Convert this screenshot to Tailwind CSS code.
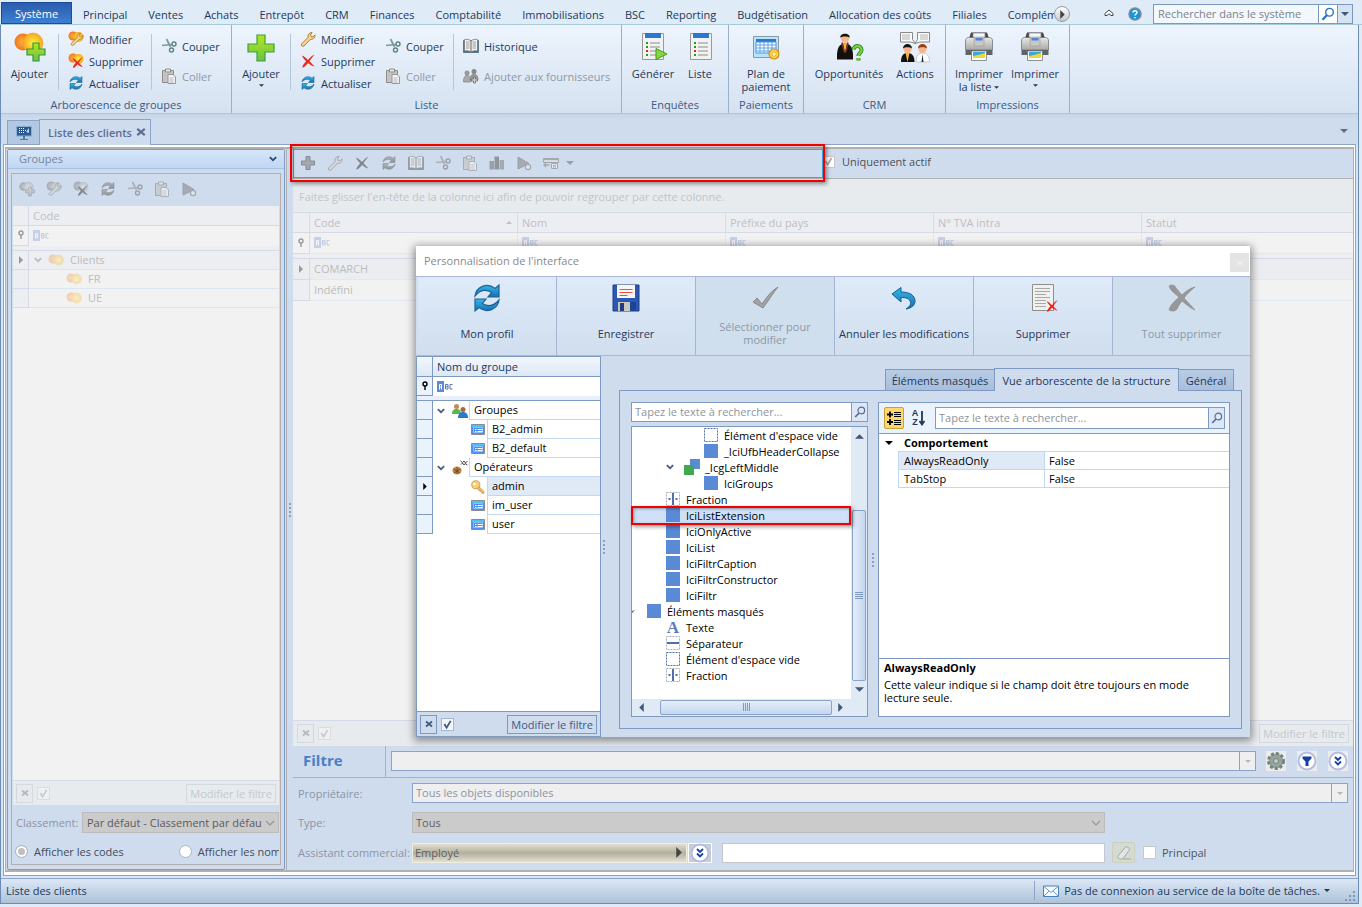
<!DOCTYPE html>
<html lang="fr">
<head>
    <meta charset="UTF-8">
    <meta name="viewport" content="width=device-width, initial-scale=1.0">
    <title>Liste des clients</title>
    <script src="https://cdn.jsdelivr.net/npm/@tailwindcss/browser@4"></script>
</head>
<body class="relative flex flex-col min-h-screen bg-[#dfebf7] font-['Open_Sans','Noto_Sans',sans-serif] text-[11px] leading-[13px] text-[#1e395b]">

    <!-- Icon sprite -->
    <svg class="absolute w-0 h-0" aria-hidden="true">
        <defs>
            <linearGradient id="g-green" x1="0" y1="0" x2="0" y2="1"><stop offset="0" stop-color="#b4e61e"/><stop offset="1" stop-color="#6cc04a"/></linearGradient>
            <radialGradient id="g-orange"><stop offset="0" stop-color="#ffb04a"/><stop offset="1" stop-color="#f07818"/></radialGradient>
            <radialGradient id="g-yellow"><stop offset="0" stop-color="#fff04a"/><stop offset="1" stop-color="#f8a81c"/></radialGradient>
            <linearGradient id="g-blue" x1="0" y1="0" x2="0" y2="1"><stop offset="0" stop-color="#35b8e8"/><stop offset="1" stop-color="#1c6cb0"/></linearGradient>
            <linearGradient id="g-gray" x1="0" y1="0" x2="0" y2="1"><stop offset="0" stop-color="#e8e8e6"/><stop offset="1" stop-color="#a8a8a4"/></linearGradient>
        </defs>
        <symbol id="balls-plus" viewBox="0 0 32 32">
            <circle cx="9" cy="11" r="8.500" fill="url(#g-orange)"/><circle cx="19" cy="12" r="10" fill="url(#g-yellow)" stroke="#f0a020" stroke-width=".6"/>
            <path d="M19 12h6v6h6v6h-6v6h-6v-6h-6v-6h6z" fill="url(#g-green)" stroke="#2f9a3c" stroke-width="1.200"/>
        </symbol>
        <symbol id="plus" viewBox="0 0 32 32"><path d="M12 4h8v9h9v8h-9v9h-8v-9H3v-8h9z" fill="url(#g-green)" stroke="#3aa23c" stroke-width="1.200"/></symbol>
        <symbol id="plus-dark" viewBox="0 0 16 16"><path d="M6 1.500h4V6h4.500v4H10v4.500H6V10H1.500V6H6z" fill="#888" stroke="#555"/></symbol>
        <symbol id="wrench" viewBox="0 0 16 16"><path d="M1.500 13L8 6.500C7.500 4 9 1.500 12 1.500L10.500 4l.7 1.600 1.800.2 2-2c.3 3-2 5-4.500 4.500L4 15c-1.500 1-3.500-.5-2.500-2z" fill="#fbd489" stroke="#a07838" stroke-width=".9"/></symbol>
        <symbol id="cross" viewBox="0 0 16 16"><path d="M2 2.500C4 3 6 5 8 7c2-2.500 4-4.500 6.500-5.500C12.500 4 11 6 9.500 8.300c1.500 1.700 3.300 3.500 5 5.200C12 13 9.800 11.500 8 10c-1.700 2-3 4-5.500 4.800C2 13 4 10.500 6.200 8.300 4.500 6.500 2.500 4.500 2 2.500z" fill="#e8281c"/></symbol>
        <symbol id="cross-big" viewBox="0 0 32 32"><path d="M3 4c3-2 6-1 7 2l6 7c4-4 8-7 13-8-4 3-8 7-11 11l11 12c-5-2-9-6-13-9-2 3-4 5-5 8-1 2-5 3-8 1 1-5 6-9 10-13C9 12 4 8 3 4z" fill="#989898" stroke="#888" stroke-width=".6"/></symbol>
        <symbol id="balls" viewBox="0 0 16 16"><circle cx="5" cy="7" r="4.500" fill="url(#g-orange)"/><circle cx="10.500" cy="8" r="5" fill="url(#g-yellow)" stroke="#f0a020" stroke-width=".5"/></symbol>
        <symbol id="balls-wrench" viewBox="0 0 16 16"><circle cx="5" cy="5" r="4.500" fill="url(#g-orange)"/><circle cx="10.500" cy="6" r="5" fill="url(#g-yellow)"/><use href="#wrench" x="2" y="1" width="14" height="14"/></symbol>
        <symbol id="balls-cross" viewBox="0 0 16 16"><circle cx="5" cy="5" r="4.500" fill="url(#g-orange)"/><circle cx="10.500" cy="6" r="5" fill="url(#g-yellow)"/><use href="#cross" x="3" y="3" width="13" height="13"/></symbol>
        <symbol id="refresh" viewBox="0 0 16 16">
            <path d="M2 7C2.500 2.500 8 0 12 3.200L14 1.500V7.500H8.500L10.300 5.300C7.500 3.500 4.500 4 2 7z" fill="url(#g-blue)" stroke="#1a6496" stroke-width=".6"/>
            <path d="M14 9C13.500 13.500 8 16 4 12.800L2 14.500V8.500H7.500L5.700 10.700C8.500 12.500 11.500 12 14 9z" fill="url(#g-blue)" stroke="#1a6496" stroke-width=".6"/>
        </symbol>
        <symbol id="scissors" viewBox="0 0 16 16"><path d="M5.500 1L9.500 9M1 7.500L11 6.500" stroke="#7c9c9c" stroke-width="1.700" fill="none"/><circle cx="13" cy="6" r="2" fill="none" stroke="#5f8484" stroke-width="1.400"/><circle cx="10.500" cy="12" r="2" fill="none" stroke="#5f8484" stroke-width="1.400"/></symbol>
        <symbol id="paste" viewBox="0 0 16 16"><path d="M1.500 2.500h11v12h-11z" fill="#c4c4c2" stroke="#8c8c8a"/><path d="M4.500 1h5v3h-5z" fill="#e8e8e8" stroke="#8c8c8a"/><path d="M7 6.500h5l2.500 2.500v6.500H7z" fill="#f4f4f4" stroke="#969696"/><path d="M8.500 10h4M8.500 12h4M8.500 14h4" stroke="#aaa" stroke-width=".8"/></symbol>
        <symbol id="book" viewBox="0 0 16 16"><path d="M.5 2.500h15v12H.5z" fill="#2f70b4" stroke="#5c7890"/><path d="M1.500 1.500C4 1 6.500 1.500 8 3c1.500-1.500 4-2 6.500-1.500V13c-2.500-.5-5 0-6.500 1-1.500-1-4-1.500-6.500-1z" fill="#f4f2ec" stroke="#777" stroke-width=".8"/><path d="M8 3v11" stroke="#666"/><path d="M3 4h3.500M3 6h3.500M3 8h3.500M3 10h3.500M9.500 4H13M9.500 6H13M9.500 8H13M9.500 10H13" stroke="#888" stroke-width=".8"/></symbol>
        <symbol id="people" viewBox="0 0 16 16"><circle cx="4" cy="5" r="2.500" fill="#999"/><path d="M.5 14c0-5 1.500-6.500 3.500-6.500S8 9 8 14z" fill="#aaa" stroke="#777" stroke-width=".6"/><circle cx="11" cy="3.500" r="2.500" fill="#888"/><path d="M7 12c0-4 1.500-6 4-6s4 2 4 6z" fill="#999" stroke="#777" stroke-width=".6"/><path d="M10.500 9h2v2h2v2h-2v2h-2v-2h-2v-2h2z" fill="#ccc" stroke="#666" stroke-width=".7"/></symbol>
        <symbol id="report" viewBox="0 0 32 32"><path d="M6.500 2.500h21v26h-21z" fill="#f2f2f0" stroke="#9a9a9a"/><path d="M9 2h16v5H9z" fill="#2a78d4"/><path d="M10 11h2v2h-2zM10 15h2v2h-2zM10 23h2v2h-2z" fill="#18a018"/><path d="M10 19h2v2h-2z" fill="#f02020"/><path d="M14 12h10M14 16h10M14 20h10M14 24h10" stroke="#bebebe" stroke-width="2"/></symbol>
        <symbol id="generate" viewBox="0 0 32 32"><use href="#report" width="32" height="32" x="-1"/><path d="M19 17.500l11 5.500-11 5.500z" fill="#8ad43c" stroke="#3c9a2c"/></symbol>
        <symbol id="schedule" viewBox="0 0 32 32"><path d="M3.500 5.500h25v21h-25z" fill="#b8e4fb" stroke="#8c9aa4"/><path d="M6 8h20v3H6z" fill="#2a78d4"/><path d="M6 11h20v11H6z" fill="#fff" stroke="#4a94dc"/><path d="M6 14h20M6 17h20M6 20h20M10 11v11M14 11v11M18 11v11M22 11v11" stroke="#5aa4e8"/><circle cx="24" cy="23" r="5" fill="#ffd23c" stroke="#d09418" stroke-width="1.200"/><circle cx="24" cy="23" r="2.200" fill="#fdf0b8" stroke="#d8a028" stroke-width=".7"/></symbol>
        <symbol id="man" viewBox="0 0 16 28"><path d="M0 27c-.5-11 2-16 8-16s8.500 5 8 16z" fill="#14100f"/><path d="M6 11l2 10 2-10z" fill="#f4b828"/><path d="M5 10l2 9M11 10l-2 9" stroke="#7a2a2a" stroke-width="1.500"/><circle cx="8" cy="6" r="4.200" fill="#f8b888"/><path d="M3.300 5C3 0 13 0 12.700 5 11 3.500 5 3.500 3.300 5z" fill="#141414"/></symbol>
        <symbol id="opportunity" viewBox="0 0 32 32"><use href="#man" x="4" y="1" width="16" height="29"/><path d="M20.500 19c0-5.500 8-5 8 0 0 3-3 3-3 6M25.500 27v2.500" fill="none" stroke="#2f8a20" stroke-width="4"/><path d="M20.500 19c0-5.500 8-5 8 0 0 3-3 3-3 6M25.500 27v2.500" fill="none" stroke="#7ed040" stroke-width="2.200"/></symbol>
        <symbol id="actions" viewBox="0 0 32 32"><path d="M1.500 1.500h12v7l3 4-5-1.500h-10zM30.500 1.500h-12v7l-2.500 4 5-1.500h9.500z" fill="#fafafa" stroke="#888"/><path d="M3 4h8M3 6h8M3 8h8M21 4h8M21 6h8M21 8h8" stroke="#b4b4b4"/><path d="M2 31c0-6 2-9 6.500-9s7 3 7 9z" fill="#14100f"/><path d="M6.500 22l2 9 2-9z" fill="#f4b828"/><circle cx="8.500" cy="18" r="4" fill="#f6b48a"/><path d="M4 17.500c0-6 9-6 9 0-2-1.800-7-1.800-9 0z" fill="#141414"/><path d="M17 31c0-6 2-9 6.500-9s7 3 7 9z" fill="#fff" stroke="#aaa" stroke-width=".6"/><path d="M23.500 23l-1 8h2z" fill="#14244c"/><circle cx="23.500" cy="18" r="4" fill="#f6b48a"/><path d="M19 17.500c0-6 9-6 9 0-2-1.800-7-1.800-9 0z" fill="#a03c10"/></symbol>
        <symbol id="printer" viewBox="0 0 32 32"><path d="M8 1.500h16l2 6H6z" fill="#444"/><path d="M10 2h12v7H10z" fill="#f4f8fc" stroke="#888" stroke-width=".8"/><path d="M2.500 10c0-2 1-3.500 3-3.500h21c2 0 3 1.500 3 3.500v9h-27z" fill="url(#g-gray)" stroke="#777" stroke-width=".8"/><path d="M2.500 19h27v5h-27z" fill="#606468"/><path d="M11 6h10v9H11z" fill="#c8c8c4" stroke="#999" stroke-width=".6"/><path d="M12.500 7h7v2.500h-7z" fill="#5080dc"/><path d="M8.500 20h15v9.500h-15z" fill="#fff" stroke="#777" stroke-width=".8"/><path d="M10 21h12v4H10z" fill="#38a8dc"/><path d="M10 25l5-1 7-2v5H10z" fill="#ecd838"/></symbol>
        <symbol id="envelope" viewBox="0 0 16 12"><path d="M.5 1h15v10.500H.5z" fill="#f4faff" stroke="#4a80b8"/><path d="M1 1.500l7 6 7-6M1 11l5-5M15 11l-5-5" fill="none" stroke="#6c9ccc"/></symbol>
        <symbol id="monitor" viewBox="0 0 16 16"><path d="M.5 1.500h15v9.500H.5z" fill="#2c5890" stroke="#8cacd0"/><path d="M3 3.500h1M5 3.500h1M7 3.500h1M3 5.500h1M5 5.500h1M7 5.500h1M9 5.500h1M3 7.500h1M5 7.500h1M7 7.500h1" stroke="#fff"/><path d="M10 7l3-4v5z" fill="#b8d4f0"/><path d="M7 11h2v3H7zM4 14h8v1H4z" fill="#5078a8"/></symbol>
        <symbol id="floppy" viewBox="0 0 32 32"><path d="M3 3h26v26H3z" fill="#2a58b4" stroke="#1c3c84"/><path d="M7 3h18v13H7z" fill="#f8f6f4"/><path d="M9.500 7.500h13M9.500 10.500h13M9.500 13.500h8" stroke="#f05038" stroke-width="1.200"/><path d="M8 20h13v9H8z" fill="#c8c8bc"/><path d="M10 21h4v8h-4z" fill="#1c3c84"/><path d="M20 20h6v9h-6z" fill="#1c4494"/></symbol>
        <symbol id="check" viewBox="0 0 32 32"><path d="M4 20l4-4 5 6C18 15 22 9 29 5c-5 6-9 13-15 21z" fill="#a2a2a2" stroke="#8a8a8a"/></symbol>
        <symbol id="undo" viewBox="0 0 32 32"><path d="M4 12l9-6.500v4.500c8 0 14 3 14 9 0 4-3 7-9 8 3-2 5-4 4.500-6.500C22 16.500 18 15.500 13 15.500V20z" fill="url(#g-blue)" stroke="#145c94"/></symbol>
        <symbol id="doc-cross" viewBox="0 0 32 32"><path d="M5.500 2.500h21v26h-21z" fill="#f0f0ee" stroke="#8e8e8e"/><path d="M8 6.500h15M8 9.500h15M8 12.500h11M8 15.500h15M8 18.500h11M8 21.500h11M8 24.500h11" stroke="#a8a8a8"/><use href="#cross" x="18" y="17" width="14" height="14"/></symbol>
        <symbol id="pin" viewBox="0 0 8 10"><path d="M4 1.500h.01M4 5v4" stroke="currentColor" stroke-width="1.400"/><circle cx="4" cy="3" r="2" fill="none" stroke="currentColor" stroke-width="1.400"/></symbol>
        <symbol id="abc" viewBox="0 0 16 11"><path d="M0 0h7v11H0z" fill="#5a8ad8"/><path d="M2.500 8.500V3.500h2v5M2.500 6h2" fill="none" stroke="#fff"/><path d="M8.500 3.500h2.500v4.500H8.500zM8.500 5.700H11M15.500 3.500h-2.500v4.500h2.500" fill="none" stroke="#5a78a4"/></symbol>
        <symbol id="chev" viewBox="0 0 8 6"><path d="M.8 1.200L4 4.200l3.200-3" fill="none" stroke="currentColor" stroke-width="1.800"/></symbol>
        <symbol id="chev-thin" viewBox="0 0 10 6"><path d="M1 1l4 4 4-4" fill="none" stroke="currentColor" stroke-width="1.100"/></symbol>
        <symbol id="caret" viewBox="0 0 8 4"><path d="M0 0h8L4 4z" fill="currentColor"/></symbol>
        <symbol id="right" viewBox="0 0 4 8"><path d="M0 0v8l4-4z" fill="currentColor"/></symbol>
        <symbol id="search" viewBox="0 0 12 12"><circle cx="7.300" cy="4.500" r="3.300" fill="none" stroke="currentColor" stroke-width="1.200"/><path d="M5 7L1.200 11" stroke="currentColor" stroke-width="1.800"/></symbol>
        <symbol id="play-gear" viewBox="0 0 16 16"><path d="M2 2l11 6.500L2 14z" fill="#8c8c8c" stroke="#777"/><circle cx="12" cy="12" r="2.600" fill="#eee" stroke="#888" stroke-width="1.300"/></symbol>
        <symbol id="chart" viewBox="0 0 16 16"><path d="M.5 6h4.500v8.500H.5z" fill="#777"/><path d="M5.500 1.500h4.500v13H5.500z" fill="#666"/><path d="M10.500 5h4.500v9.500h-4.500z" fill="#888"/></symbol>
        <symbol id="grid-export" viewBox="0 0 16 16"><path d="M.5 3.500h15v4H.5z" fill="#ddd" stroke="#888"/><path d="M.5 3h15v2H.5z" fill="#888"/><path d="M.5 10h6M3 8l-2 2 2 2" fill="none" stroke="#888" stroke-width="1.300"/><path d="M8.500 8.500h6v5h-6z" fill="#eee" stroke="#888"/><path d="M10 10l3 2.500M13 10l-3 2.500" stroke="#888"/></symbol>
        <symbol id="x-small" viewBox="0 0 8 8"><path d="M1 1.500l6 5M7 1.500l-6 5" stroke="currentColor" stroke-width="1.700"/></symbol>
        <symbol id="tick" viewBox="0 0 10 10"><path d="M1.500 4.500l2.500 4 4.500-7.500" fill="none" stroke="currentColor" stroke-width="2"/></symbol>
        <symbol id="card" viewBox="0 0 14 11"><path d="M.5.5h13v10H.5z" fill="#4a90f4" stroke="#8c8c8c"/><path d="M1 1h12v2H1z" fill="#4cc0f8"/><path d="M2.500 3.500h9v5h-9z" fill="none" stroke="#8cc0fc"/><path d="M4 5.500h1.500M6.500 5.500h5M4 7.500h1.500M6.500 7.500h5" stroke="#fff"/></symbol>
        <symbol id="group" viewBox="0 0 16 16"><circle cx="4.500" cy="3.500" r="2.500" fill="#c88850"/><path d="M0 11c0-4 2-5 4.500-5S9 7 9 11z" fill="#58b848"/><circle cx="11" cy="6.500" r="2.500" fill="#a86838"/><path d="M6 15c0-4 2-6 5-6s5 2 5 6z" fill="#2878d0"/></symbol>
        <symbol id="operators" viewBox="0 0 16 16"><ellipse cx="5" cy="10.500" rx="4.500" ry="4" fill="#c08848"/><path d="M1.500 9l3 2 4-2M2 12.500l3-1 3 1M5 7v7" fill="none" stroke="#6c3c14" stroke-width=".8"/><path d="M8.500 1l2 1.500 1.500-1.500 1.500 2 2-2M9 4.500l1.500-1.500 1.500 2 1-1.500 2.500 1.500" stroke="#333" stroke-width=".9" fill="none"/></symbol>
        <symbol id="key" viewBox="0 0 16 16"><circle cx="5.500" cy="5.500" r="4.700" fill="#f8d078" stroke="#c08838" stroke-width=".8"/><circle cx="4" cy="4.500" r="1.400" fill="#fff"/><path d="M9 7.500l6 6-.5 2-2-.5-1-2-2-.5-2-3z" fill="#f0b860" stroke="#c08838" stroke-width=".7"/></symbol>
        <symbol id="split" viewBox="0 0 14 14"><path d="M.5.500h13v13H.5z" fill="none" stroke="#a8b0bc" stroke-dasharray="2 1"/><path d="M7 1v12M2.500 7h2M9.500 7h2" stroke="#5070a8" stroke-width="2"/></symbol>
        <symbol id="empty" viewBox="0 0 14 14"><path d="M.5.500h13v13H.5z" fill="#fff" stroke="#5070a8" stroke-dasharray="2 1"/></symbol>
        <symbol id="sep" viewBox="0 0 14 14"><path d="M.5.500h13v13H.5z" fill="none" stroke="#a8b0bc" stroke-dasharray="2 1"/><path d="M1 7h12" stroke="#5070a8" stroke-width="2"/></symbol>
        <symbol id="grip" viewBox="0 0 2 14"><path d="M0 0h2v2H0zM0 4h2v2H0zM0 8h2v2H0zM0 12h2v2H0z" fill="#8ba0c4"/></symbol>
        <symbol id="dbl" viewBox="0 0 20 20"><circle cx="10" cy="10" r="8.500" fill="#fff" stroke="#b4bce0" stroke-width="2"/><path d="M7 6l3 3 3-3M7 10.500l3 3 3-3" fill="none" stroke="#1840a0" stroke-width="1.800"/></symbol>
    </svg>

    <!-- Ribbon tabs -->
    <nav class="flex items-end h-[25px] pl-px pr-[9px] border-b border-[#a5cbd9]">
        <a href="#" class="w-[71px] h-[22px] pt-[4px] text-center text-white border border-[#1c4c9c] bg-linear-to-b from-[#2a5cae] to-[#3f7fd0]">Système</a>
        <div class="flex flex-1 min-w-0 max-w-[982px] h-[22px] pl-[11px] pt-[6px] gap-[21px] overflow-hidden whitespace-nowrap">
            <a href="#">Principal</a>
            <a href="#">Ventes</a>
            <a href="#">Achats</a>
            <a href="#">Entrepôt</a>
            <a href="#">CRM</a>
            <a href="#">Finances</a>
            <a href="#">Comptabilité</a>
            <a href="#">Immobilisations</a>
            <a href="#">BSC</a>
            <a href="#">Reporting</a>
            <a href="#">Budgétisation</a>
            <a href="#">Allocation des coûts</a>
            <a href="#">Filiales</a>
            <a href="#">Complément</a>
        </div>
        <button type="button" aria-label="Onglets suivants" class="flex items-center justify-center w-4 h-4 mb-[2px] rounded-full border border-[#9a9aa2] bg-linear-to-b from-white to-[#c8c8d0] text-[#444]"><svg class="w-[5px] h-[9px]"><use href="#right"/></svg></button>
        <div class="flex items-center h-[21px] ml-auto">
            <button type="button" aria-label="Réduire le ruban" class="mr-[14px]">
                <svg class="w-[10px] h-[9px]" viewBox="0 0 10 9"><path d="M1 4.500L5 1l4 3.500v2H7L5 4.800 3 6.500H1z" fill="#fff" stroke="#3c4450"/></svg>
            </button>
            <button type="button" aria-label="Aide" class="mr-[11px]">
                <svg class="w-[14px] h-[14px]" viewBox="0 0 14 14"><circle cx="7" cy="7" r="6" fill="#1e94d8" stroke="#7c8c98" stroke-width="1.500"/><path d="M5 5.500c0-2.500 4-2.500 4 0C9 7 7 7 7 8.500M7 10v1.300" fill="none" stroke="#fff" stroke-width="1.500"/></svg>
            </button>
            <input type="text" aria-label="Rechercher dans le système" placeholder="Rechercher dans le système" class="w-[166px] h-5 px-1 bg-[#f2f8fe] border border-[#7c98c0] placeholder:text-[#7c828a]">
            <button type="button" aria-label="Rechercher" class="flex items-center justify-center w-[18px] h-5 bg-white border-y border-[#7c98c0] text-[#2870c0]"><svg class="w-[14px] h-[14px]"><use href="#search"/></svg></button>
            <button type="button" aria-label="Options de recherche" class="flex items-center justify-center w-4 h-5 bg-[#d4e2f2] border border-[#7c98c0] text-[#40587c]"><svg class="w-2 h-1"><use href="#caret"/></svg></button>
        </div>
    </nav>

    <div class="flex flex-col flex-1 mr-[3px] mb-[3px] border-x border-b border-[#6c8cb8]">

        <!-- Ribbon -->
        <div class="flex overflow-hidden bg-linear-to-b from-[#edf4fd] to-[#d5e2f1] border-b border-[#a5cbd9]">
            <section class="w-[231px] border-r border-[#9cb0cc]">
                <div class="flex h-[73px]">
                    <button type="button" class="flex flex-col items-center w-[57px] pt-[6px]"><svg class="w-8 h-8"><use href="#balls-plus"/></svg><span class="mt-1">Ajouter</span></button>
                    <div class="w-px h-[56px] mt-[9px] bg-[#b4c6dc]"></div>
                    <div class="w-[92px] pl-[9px] pt-[3px]">
                        <button type="button" class="flex items-center gap-[5px] h-[22px]"><svg class="w-4 h-4"><use href="#balls-wrench"/></svg>Modifier</button>
                        <button type="button" class="flex items-center gap-[5px] h-[22px]"><svg class="w-4 h-4"><use href="#balls-cross"/></svg>Supprimer</button>
                        <button type="button" class="flex items-center gap-[5px] h-[22px]"><svg class="w-4 h-4"><use href="#refresh"/></svg>Actualiser</button>
                    </div>
                    <div class="w-px h-[56px] mt-[9px] bg-[#b4c6dc]"></div>
                    <div class="pl-[9px] pt-[6px]">
                        <button type="button" class="flex items-center gap-[5px] h-[30px]"><svg class="w-4 h-4"><use href="#scissors"/></svg>Couper</button>
                        <button type="button" disabled class="flex items-center gap-[5px] h-[30px] text-[#8e98a6]"><svg class="w-4 h-4"><use href="#paste"/></svg>Coller</button>
                    </div>
                </div>
                <h2 class="h-[15px] text-center text-[#3e5a84]">Arborescence de groupes</h2>
            </section>
            <section class="w-[390px] border-r border-[#9cb0cc]">
                <div class="flex h-[73px]">
                    <button type="button" class="flex flex-col items-center w-[58px] pt-[6px]"><svg class="w-8 h-8"><use href="#plus"/></svg><span class="mt-1">Ajouter</span><svg class="w-[5px] h-[3px] mt-1"><use href="#caret"/></svg></button>
                    <div class="w-px h-[56px] mt-[9px] bg-[#b4c6dc]"></div>
                    <div class="w-[85px] pl-[9px] pt-[3px]">
                        <button type="button" class="flex items-center gap-[5px] h-[22px]"><svg class="w-4 h-4"><use href="#wrench"/></svg>Modifier</button>
                        <button type="button" class="flex items-center gap-[5px] h-[22px]"><svg class="w-4 h-4"><use href="#cross"/></svg>Supprimer</button>
                        <button type="button" class="flex items-center gap-[5px] h-[22px]"><svg class="w-4 h-4"><use href="#refresh"/></svg>Actualiser</button>
                    </div>
                    <div class="w-[77px] pl-[9px] pt-[6px]">
                        <button type="button" class="flex items-center gap-[5px] h-[30px]"><svg class="w-4 h-4"><use href="#scissors"/></svg>Couper</button>
                        <button type="button" disabled class="flex items-center gap-[5px] h-[30px] text-[#8e98a6]"><svg class="w-4 h-4"><use href="#paste"/></svg>Coller</button>
                    </div>
                    <div class="w-px h-[56px] mt-[9px] bg-[#b4c6dc]"></div>
                    <div class="pl-[9px] pt-[6px] whitespace-nowrap">
                        <button type="button" class="flex items-center gap-[5px] h-[30px]"><svg class="w-4 h-4"><use href="#book"/></svg>Historique</button>
                        <button type="button" disabled class="flex items-center gap-[5px] h-[30px] text-[#8e98a6]"><svg class="w-4 h-4"><use href="#people"/></svg>Ajouter aux fournisseurs</button>
                    </div>
                </div>
                <h2 class="h-[15px] text-center text-[#3e5a84]">Liste</h2>
            </section>
            <section class="w-[107px] border-r border-[#9cb0cc]">
                <div class="flex h-[73px] pl-1">
                    <button type="button" class="flex flex-col items-center w-[54px] pt-[6px]"><svg class="w-8 h-8"><use href="#generate"/></svg><span class="mt-1">Générer</span></button>
                    <button type="button" class="flex flex-col items-center w-[40px] pt-[6px]"><svg class="w-8 h-8"><use href="#report"/></svg><span class="mt-1">Liste</span></button>
                </div>
                <h2 class="h-[15px] text-center text-[#3e5a84]">Enquêtes</h2>
            </section>
            <section class="w-[75px] border-r border-[#9cb0cc]">
                <div class="flex justify-center h-[73px]">
                    <button type="button" class="flex flex-col items-center w-[64px] pt-[6px]"><svg class="w-8 h-8"><use href="#schedule"/></svg><span class="mt-1">Plan de paiement</span></button>
                </div>
                <h2 class="h-[15px] text-center text-[#3e5a84]">Paiements</h2>
            </section>
            <section class="w-[142px] border-r border-[#9cb0cc]">
                <div class="flex h-[73px] pl-[6px]">
                    <button type="button" class="flex flex-col items-center w-[78px] pt-[6px]"><svg class="w-8 h-8"><use href="#opportunity"/></svg><span class="mt-1">Opportunités</span></button>
                    <button type="button" class="flex flex-col items-center w-[54px] pt-[6px]"><svg class="w-8 h-8"><use href="#actions"/></svg><span class="mt-1">Actions</span></button>
                </div>
                <h2 class="h-[15px] text-center text-[#3e5a84]">CRM</h2>
            </section>
            <section class="w-[124px] border-r border-[#9cb0cc]">
                <div class="flex h-[73px] pl-1">
                    <button type="button" class="flex flex-col items-center w-[58px] pt-[6px]"><svg class="w-8 h-8"><use href="#printer"/></svg><span class="mt-1">Imprimer<br>la liste <svg class="inline w-[5px] h-[3px] mb-px"><use href="#caret"/></svg></span></button>
                    <button type="button" class="flex flex-col items-center w-[54px] pt-[6px]"><svg class="w-8 h-8"><use href="#printer"/></svg><span class="mt-1">Imprimer</span><svg class="w-[5px] h-[3px] mt-1"><use href="#caret"/></svg></button>
                </div>
                <h2 class="h-[15px] text-center text-[#3e5a84]">Impressions</h2>
            </section>
        </div>

        <!-- Document tabs -->
        <div class="flex items-end h-[30px] pl-[6px] bg-linear-to-b from-[#c4d6e8] to-[#cfdcee] to-20%">
            <button type="button" aria-label="Bureau" class="flex items-center justify-center w-[33px] h-[24px] bg-[#b3c8e2] border border-b-0 border-[#8ba3c8]"><svg class="w-4 h-4"><use href="#monitor"/></svg></button>
            <div class="relative flex items-center gap-1 w-[112px] h-[26px] -mb-px -ml-px pl-2 pb-px bg-[#cfdcee] border border-b-0 border-[#8ba3c8] text-[#5c6c94] font-semibold">
                Liste des clients
                <button type="button" aria-label="Fermer l'onglet"><svg class="w-[10px] h-[10px]"><use href="#x-small"/></svg></button>
            </div>
            <button type="button" aria-label="Liste des onglets" class="mb-[11px] ml-auto mr-[10px] text-[#5c6c94]"><svg class="w-2 h-1"><use href="#caret"/></svg></button>
        </div>

        <div class="flex flex-col flex-1 px-[2px] pb-[2px] bg-[#d8e5f4]">
            <div class="flex flex-1 px-px pt-[2px] pb-[3px] bg-white border border-[#8ba3c8]">
                <main class="flex flex-1 min-w-0 bg-[#cfdcee] border border-t-2 border-b-2 border-[#b0b0b0]">

                    <!-- Groups panel -->
                    <aside class="flex flex-col w-[281px] px-px border-r border-[#b0b0b0]">
                        <div class="flex flex-col flex-1 border border-[#7d9cc9] rounded-xs">
                            <header class="flex items-center justify-between h-[19px] pl-[11px] pr-[7px] pb-px border-b border-[#a9c3e4] bg-linear-to-b from-[#d6e6f9] to-[#c1d6f1] text-[#76869c]">
                                Groupes
                                <button type="button" aria-label="Replier les groupes" class="text-[#2c4a74]"><svg class="w-2 h-[6px]"><use href="#chev"/></svg></button>
                            </header>
                            <div class="flex flex-col flex-1 mx-[3px] my-1 px-px border border-[#b0b0b0]">
                                <div class="flex h-[32px] pb-[2px] grayscale opacity-60">
                                    <button type="button" aria-label="Ajouter un groupe" class="flex items-center justify-center w-[27px]"><svg class="w-4 h-4"><use href="#balls-plus"/></svg></button>
                                    <button type="button" aria-label="Modifier le groupe" class="flex items-center justify-center w-[27px]"><svg class="w-4 h-4"><use href="#balls-wrench"/></svg></button>
                                    <button type="button" aria-label="Supprimer le groupe" class="flex items-center justify-center w-[27px]"><svg class="w-4 h-4"><use href="#balls-cross"/></svg></button>
                                    <button type="button" aria-label="Actualiser les groupes" class="flex items-center justify-center w-[27px]"><svg class="w-4 h-4"><use href="#refresh"/></svg></button>
                                    <button type="button" aria-label="Couper le groupe" class="flex items-center justify-center w-[27px]"><svg class="w-4 h-4"><use href="#scissors"/></svg></button>
                                    <button type="button" aria-label="Coller le groupe" class="flex items-center justify-center w-[27px]"><svg class="w-4 h-4"><use href="#paste"/></svg></button>
                                    <button type="button" aria-label="Exécuter" class="flex items-center justify-center w-[27px]"><svg class="w-4 h-4"><use href="#play-gear"/></svg></button>
                                </div>
                                <div class="flex-1 bg-[#f2f2f2]">
                                    <table class="w-full table-fixed border-separate border-spacing-0 text-left text-[#bcbcbc] [&_td]:pb-px">
                                        <colgroup><col class="w-4"><col></colgroup>
                                        <thead>
                                            <tr class="h-5 bg-[#eceef1] text-[#bcc0c6]"><th class="border-r border-b border-[#d4dbe6]"></th><th class="pl-1 font-normal border-b border-[#d4dbe6]">Code</th></tr>
                                            <tr class="h-5"><td class="border-r border-b border-[#d4dbe6] text-[#999]"><svg class="w-2 h-[10px] ml-1"><use href="#pin"/></svg></td><td class="pl-1"><svg class="w-4 h-[11px] opacity-30"><use href="#abc"/></svg></td></tr>
                                            <tr class="h-[5px] bg-[#eceef1]"><td colspan="2" class="border-b border-[#d4dbe6]"></td></tr>
                                        </thead>
                                        <tbody>
                                            <tr class="h-[19px] bg-[#eceef1]"><td class="border-r border-b border-[#d4dbe6] text-[#999]"><svg class="w-1 h-2 ml-[6px]"><use href="#right"/></svg></td><td class="border-b border-[#dde5f0]"><div class="flex items-center gap-[6px] pl-[5px]"><svg class="w-2 h-[6px]"><use href="#chev"/></svg><svg class="w-4 h-4 opacity-30"><use href="#balls"/></svg><span>Clients</span></div></td></tr>
                                            <tr class="h-[19px]"><td class="border-r border-b border-[#d4dbe6] bg-[#eceef1]"></td><td class="border-b border-[#dde5f0]"><div class="flex items-center gap-[6px] pl-[37px]"><svg class="w-4 h-4 opacity-30"><use href="#balls"/></svg><span>FR</span></div></td></tr>
                                            <tr class="h-[19px]"><td class="border-r border-b border-[#d4dbe6] bg-[#eceef1]"></td><td class="border-b border-[#dde5f0]"><div class="flex items-center gap-[6px] pl-[37px]"><svg class="w-4 h-4 opacity-30"><use href="#balls"/></svg><span>UE</span></div></td></tr>
                                        </tbody>
                                    </table>
                                </div>
                                <div class="flex items-center h-[25px] px-[3px] bg-[#e7ebee] border-t border-[#d4dbe6] text-[#c4c8ce]">
                                    <button type="button" aria-label="Effacer le filtre des groupes" class="flex items-center justify-center w-[17px] h-[19px] border border-[#d4d9e0] text-[#b4b8be]"><svg class="w-2 h-2"><use href="#x-small"/></svg></button>
                                    <label class="relative ml-1 w-[13px] h-[13px]"><input type="checkbox" checked aria-label="Activer le filtre des groupes" class="block appearance-none w-[13px] h-[13px] border border-[#dcdcdc] bg-[#f0f0f0]"><svg class="absolute left-[2px] top-[2px] w-[9px] h-[9px] text-[#c4ccd8]"><use href="#tick"/></svg></label>
                                    <button type="button" class="h-[19px] px-[3px] ml-auto border border-[#d4d9e0]">Modifier le filtre</button>
                                </div>
                                <div class="flex items-center h-[34px] pl-[3px] text-[#8c94a4]">
                                    <label for="classement" class="w-[66px]">Classement:</label>
                                    <div class="relative flex-1">
                                        <select id="classement" class="block appearance-none w-full h-[21px] pl-1 pr-4 border border-[#bcbcbc] bg-[#cbcbcb] text-[#5a5a5a] overflow-hidden"><option>Par défaut - Classement par défau</option></select>
                                        <svg class="absolute right-1 top-2 w-[10px] h-[6px] text-[#949494]"><use href="#chev-thin"/></svg>
                                    </div>
                                </div>
                                <div class="flex gap-[55px] h-[25px] pt-[6px] pl-[2px] overflow-hidden whitespace-nowrap text-[#444c5c]">
                                    <label class="flex items-start gap-[6px]"><input type="radio" name="affichage" checked class="appearance-none shrink-0 w-[13px] h-[13px] rounded-full border border-[#b0b4bc] bg-[#c0c0c0] shadow-[inset_0_0_0_2px_#fff]">Afficher les codes</label>
                                    <label class="flex items-start gap-[6px]"><input type="radio" name="affichage" class="appearance-none shrink-0 w-[13px] h-[13px] rounded-full border border-[#b0b4bc] bg-white">Afficher les nom</label>
                                </div>
                            </div>
                        </div>
                    </aside>
                    <div class="flex items-center justify-center w-[6px]"><svg class="w-[2px] h-[14px]"><use href="#grip"/></svg></div>

                    <!-- Customer list -->
                    <section class="relative flex flex-col flex-1 min-w-0">
                        <div class="flex h-[30px] border-b border-[#b0b0b0]">
                            <div class="flex w-[530px] h-[29px] border border-[#3fa8dc]">
                                <div class="flex pb-[2px] grayscale opacity-60">
                                    <button type="button" aria-label="Ajouter" class="flex items-center justify-center w-[27px]"><svg class="w-4 h-4"><use href="#plus-dark"/></svg></button>
                                    <button type="button" aria-label="Modifier" class="flex items-center justify-center w-[27px]"><svg class="w-4 h-4"><use href="#wrench"/></svg></button>
                                    <button type="button" aria-label="Supprimer" class="flex items-center justify-center w-[27px]"><svg class="w-4 h-4"><use href="#cross"/></svg></button>
                                    <button type="button" aria-label="Actualiser" class="flex items-center justify-center w-[27px]"><svg class="w-4 h-4"><use href="#refresh"/></svg></button>
                                    <button type="button" aria-label="Historique" class="flex items-center justify-center w-[27px]"><svg class="w-4 h-4"><use href="#book"/></svg></button>
                                    <button type="button" aria-label="Couper" class="flex items-center justify-center w-[27px]"><svg class="w-4 h-4"><use href="#scissors"/></svg></button>
                                    <button type="button" aria-label="Coller" class="flex items-center justify-center w-[27px]"><svg class="w-4 h-4"><use href="#paste"/></svg></button>
                                    <button type="button" aria-label="Graphique" class="flex items-center justify-center w-[27px]"><svg class="w-4 h-4"><use href="#chart"/></svg></button>
                                    <button type="button" aria-label="Exécuter" class="flex items-center justify-center w-[27px]"><svg class="w-4 h-4"><use href="#play-gear"/></svg></button>
                                    <button type="button" aria-label="Exporter" class="flex items-center justify-center w-[27px]"><svg class="w-4 h-4"><use href="#grid-export"/></svg></button>
                                    <button type="button" aria-label="Autres exports" class="flex items-center justify-center w-[12px] text-[#777]"><svg class="w-2 h-1"><use href="#caret"/></svg></button>
                                </div>
                            </div>
                            <label class="relative flex items-center h-[25px] gap-[7px] text-[#4c5058]"><input type="checkbox" checked class="appearance-none w-[12px] h-[12px] border border-[#c8c8c8] bg-white"><svg class="absolute left-px top-2 w-[9px] h-[9px] text-[#aaa]"><use href="#tick"/></svg>Uniquement actif</label>
                        </div>
                        <!-- Highlight frame over the toolbar -->
                        <div class="absolute -left-[3px] -top-[5px] w-[535px] h-[38px] border-2 border-[#f00000] shadow-[2px_2px_4px_#0006,inset_1px_1px_3px_#0005] pointer-events-none"></div>
                        <p class="h-[33px] pt-[11px] pl-[6px] bg-[#e7ebee] text-[#c0c5ca]">Faites glisser l'en-tête de la colonne ici afin de pouvoir regrouper par cette colonne.</p>
                        <div class="flex-1 bg-[#f2f2f2]">
                            <table class="w-full table-fixed border-separate border-spacing-0 text-left text-[#bcbcbc] [&_td]:pb-px [&_th]:pb-px">
                                <colgroup><col class="w-[17px]"><col class="w-[208px]"><col class="w-[208px]"><col class="w-[208px]"><col class="w-[208px]"><col></colgroup>
                                <thead>
                                    <tr class="h-[21px] bg-[#eceef1] text-[#bcc0c6]">
                                        <th class="border-y border-r border-[#d4dbe6]"></th>
                                        <th class="px-1 font-normal border-y border-r border-[#d4dbe6]"><div class="flex items-center justify-between">Code<svg class="w-[6px] h-[3px] mr-px rotate-180"><use href="#caret"/></svg></div></th>
                                        <th class="pl-1 font-normal border-y border-r border-[#d4dbe6]">Nom</th>
                                        <th class="pl-1 font-normal border-y border-r border-[#d4dbe6]">Préfixe du pays</th>
                                        <th class="pl-1 font-normal border-y border-r border-[#d4dbe6]">N° TVA intra</th>
                                        <th class="pl-1 font-normal border-y border-[#d4dbe6]">Statut</th>
                                    </tr>
                                    <tr class="h-[21px]">
                                        <td class="border-r border-b border-[#d4dbe6] text-[#999]"><svg class="w-2 h-[10px] ml-1"><use href="#pin"/></svg></td>
                                        <td class="pl-1 border-r border-b border-[#e2e8f2]"><svg class="w-4 h-[11px] opacity-30"><use href="#abc"/></svg></td>
                                        <td class="pl-1 border-r border-b border-[#e2e8f2]"><svg class="w-4 h-[11px] opacity-30"><use href="#abc"/></svg></td>
                                        <td class="pl-1 border-r border-b border-[#e2e8f2]"><svg class="w-4 h-[11px] opacity-30"><use href="#abc"/></svg></td>
                                        <td class="pl-1 border-r border-b border-[#e2e8f2]"><svg class="w-4 h-[11px] opacity-30"><use href="#abc"/></svg></td>
                                        <td class="pl-1 border-b border-[#e2e8f2]"><svg class="w-4 h-[11px] opacity-30"><use href="#abc"/></svg></td>
                                    </tr>
                                    <tr class="h-[5px] bg-[#eceef1]"><td colspan="6" class="border-b border-[#d4dbe6]"></td></tr>
                                </thead>
                                <tbody>
                                    <tr class="h-[21px] bg-[#ecedf0]"><td class="border-r border-b border-[#d4dbe6] text-[#999]"><svg class="w-1 h-2 ml-[6px]"><use href="#right"/></svg></td><td class="pl-1 border-b border-[#e2e8f2]">COMARCH</td><td colspan="4" class="border-b border-[#e2e8f2]"></td></tr>
                                    <tr class="h-[21px]"><td class="border-r border-b border-[#d4dbe6] bg-[#eceef1]"></td><td class="pl-1 border-b border-[#e2e8f2]">Indéfini</td><td colspan="4" class="border-b border-[#e2e8f2]"></td></tr>
                                </tbody>
                            </table>
                        </div>
                        <div class="flex items-center h-[26px] pl-1 pr-1 pb-px bg-[#e7ebee] border-t border-[#d4dbe6] text-[#c4c8ce]">
                            <button type="button" aria-label="Effacer le filtre" class="flex items-center justify-center w-[17px] h-[19px] border border-[#d4d9e0] text-[#b4b8be]"><svg class="w-2 h-2"><use href="#x-small"/></svg></button>
                            <label class="relative ml-1 w-[13px] h-[13px]"><input type="checkbox" checked aria-label="Activer le filtre" class="block appearance-none w-[13px] h-[13px] border border-[#dcdcdc] bg-[#f0f0f0]"><svg class="absolute left-[2px] top-[2px] w-[9px] h-[9px] text-[#c4ccd8]"><use href="#tick"/></svg></label>
                            <button type="button" class="h-[19px] px-[3px] ml-auto border border-[#d4d9e0]">Modifier le filtre</button>
                        </div>

                        <!-- Filter -->
                        <div class="flex h-[32px] pr-[5px] border-b border-[#b0b0b0]">
                            <h2 class="w-[93px] pt-[6px] pl-[10px] text-[15px] leading-4 font-bold text-[#4a80c4] border-r border-[#b0b0b0]">Filtre</h2>
                            <div class="flex flex-1 items-center pl-[5px] pb-px">
                                <input type="text" aria-label="Filtre" class="flex-1 h-5 px-1 bg-[#efefef] border border-[#8ba3c8]">
                                <button type="button" aria-label="Filtres enregistrés" class="flex items-center justify-center w-4 h-5 bg-[#efefef] border border-l-0 border-[#8ba3c8] text-[#b4b8c4]"><svg class="w-[6px] h-[3px]"><use href="#caret"/></svg></button>
                                <button type="button" aria-label="Paramètres du filtre" class="ml-[10px] bg-[#ececec]"><svg class="w-5 h-5" viewBox="0 0 20 20"><circle cx="10" cy="10" r="7.500" fill="#96a49e" stroke="#76847e" stroke-width="3" stroke-dasharray="3 2"/><circle cx="10" cy="10" r="2.500" fill="#c4ccc8" stroke="#76847e"/></svg></button>
                                <button type="button" aria-label="Appliquer le filtre" class="ml-[11px] bg-[#ececec]"><svg class="w-5 h-5" viewBox="0 0 20 20"><circle cx="10" cy="10" r="8.500" fill="#fff" stroke="#b4bce0" stroke-width="2"/><path d="M5.500 5.500h9v2l-3 3V15h-3v-4.500l-3-3z" fill="#1840a0"/></svg></button>
                                <button type="button" aria-label="Déplier le filtre" class="ml-[11px] bg-[#ececec]"><svg class="w-5 h-5"><use href="#dbl"/></svg></button>
                            </div>
                        </div>
                        <div class="flex flex-col gap-[9px] h-[92px] pl-[5px] pt-[5px] pr-[5px] text-[#8c94a4]">
                            <div class="flex items-center h-5">
                                <label for="proprietaire" class="w-[114px]">Propriétaire:</label>
                                <input id="proprietaire" type="text" value="Tous les objets disponibles" class="flex-1 h-5 px-[3px] pb-px bg-[#efefef] border border-[#8ba3c8]">
                                <button type="button" aria-label="Choisir le propriétaire" class="flex items-center justify-center w-4 h-5 bg-[#efefef] border border-l-0 border-[#8ba3c8] text-[#b4b8c4]"><svg class="w-[6px] h-[3px]"><use href="#caret"/></svg></button>
                            </div>
                            <div class="flex items-center h-[21px] pr-[243px]">
                                <label for="type" class="w-[114px]">Type:</label>
                                <div class="relative flex-1">
                                    <select id="type" class="block appearance-none w-full h-[21px] px-[3px] border border-[#bcbcbc] bg-[#cbcbcb] text-[#5c6068]"><option>Tous</option></select>
                                    <svg class="absolute right-1 top-2 w-[10px] h-[6px] text-[#949494]"><use href="#chev-thin"/></svg>
                                </div>
                            </div>
                            <div class="flex items-center h-[21px]">
                                <label for="assistant" class="w-[114px] whitespace-nowrap">Assistant commercial:</label>
                                <button type="button" class="flex items-center justify-between w-[275px] h-5 px-[2px] border border-[#f0eee0] bg-linear-to-b from-[#e2ded0] via-[#b4b09e] to-[#e4e1d4] text-[#5c6068]">Employé<svg class="w-[10px] h-[11px] text-[#444]"><use href="#right"/></svg></button>
                                <button type="button" aria-label="Opérateur" class="flex items-center justify-center w-[24px] h-5 ml-px border border-white bg-[#c8ccd4]"><svg class="w-5 h-5"><use href="#dbl"/></svg></button>
                                <input id="assistant" type="text" class="flex-1 h-5 ml-[10px] px-1 bg-white border border-[#c4c8cc]">
                                <button type="button" aria-label="Effacer l'assistant" class="flex items-center justify-center w-[23px] h-[21px] ml-[7px] rounded-xs border border-[#cfd0b8] bg-[#d4dad4]"><svg class="w-4 h-4" viewBox="0 0 16 16"><path d="M2 11l7-8.500c1.500-1.500 5.500 0 4 3L7.500 13C5.500 15 1 14 2 11zM7 14h8" fill="#e4e6e4" stroke="#a4a8a4"/></svg></button>
                                <label class="flex items-center gap-[6px] w-[213px] pl-2 pb-px text-[#4c5464]"><input type="checkbox" class="appearance-none w-[13px] h-[13px] border border-[#c8c8c8] bg-white">Principal</label>
                            </div>
                        </div>
                    </section>
                </main>
            </div>
        </div>

        <!-- Status bar -->
        <footer class="flex items-center h-[25px] pl-[5px] pb-px border-t border-[#8ba3c8] bg-linear-to-b from-[#dce8f6] to-[#aec2d8]">
            <span>Liste des clients</span>
            <div class="flex items-center h-[19px] ml-auto pl-2 border-l border-[#8ba3c8]">
                <svg class="w-4 h-3 mr-[5px]"><use href="#envelope"/></svg>
                <a href="#">Pas de connexion au service de la boîte de tâches.</a>
                <svg class="w-[6px] h-[3px] ml-1"><use href="#caret"/></svg>
            </div>
            <svg class="self-end w-[11px] h-[11px] ml-[15px] mr-[2px]" viewBox="0 0 11 11"><path d="M8 0h2v2H8zM4 4h2v2H4zM8 4h2v2H8zM0 8h2v2H0zM4 8h2v2H4zM8 8h2v2H8z" fill="#7c98bc"/></svg>
        </footer>
    </div>

    <!-- Interface customisation window -->
    <div role="dialog" aria-labelledby="dialog-title" class="absolute left-[416px] top-[246px] flex flex-col w-[834px] h-[491px] bg-[#cfdcee] shadow-[0_2px_8px_2px_#0006]">
        <header class="flex items-center justify-between h-[30px] pl-2 pr-px pb-px bg-white">
            <h1 id="dialog-title" class="text-[#8a8a8a]">Personnalisation de l'interface</h1>
            <button type="button" aria-label="Fermer" class="flex items-center justify-center w-[19px] h-[19px] mt-1 bg-[#e4e4e4] text-[#f4f4f4]"><svg class="w-[6px] h-[6px]"><use href="#x-small"/></svg></button>
        </header>
        <div class="grid grid-cols-[repeat(5,139px)_1fr] h-20 pl-[2px] border-y border-[#a9b8d6] bg-[#cfdfee] divide-x divide-[#a4b4d4]">
            <button type="button" class="flex flex-col items-center pt-[5px] bg-linear-to-b from-[#dfebf9] to-[#d0deee]"><svg class="w-8 h-8"><use href="#refresh"/></svg><span class="flex items-center h-[38px]">Mon profil</span></button>
            <button type="button" class="flex flex-col items-center pt-[5px] bg-linear-to-b from-[#dfebf9] to-[#d0deee]"><svg class="w-8 h-8"><use href="#floppy"/></svg><span class="flex items-center h-[38px]">Enregistrer</span></button>
            <button type="button" disabled class="flex flex-col items-center pt-[5px] px-5 text-[#8e98a6]"><svg class="w-8 h-8"><use href="#check"/></svg><span class="flex items-center h-[38px]">Sélectionner pour modifier</span></button>
            <button type="button" class="flex flex-col items-center pt-[5px] whitespace-nowrap bg-linear-to-b from-[#dfebf9] to-[#d0deee]"><svg class="w-8 h-8"><use href="#undo"/></svg><span class="flex items-center h-[38px]">Annuler les modifications</span></button>
            <button type="button" class="flex flex-col items-center pt-[5px] bg-linear-to-b from-[#dfebf9] to-[#d0deee]"><svg class="w-8 h-8"><use href="#doc-cross"/></svg><span class="flex items-center h-[38px]">Supprimer</span></button>
            <button type="button" disabled class="flex flex-col items-center pt-[5px] text-[#8e98a6]"><svg class="w-8 h-8"><use href="#cross-big"/></svg><span class="flex items-center h-[38px]">Tout supprimer</span></button>
        </div>
        <div class="flex flex-1 min-h-0">
            <!-- User groups -->
            <div class="flex flex-col w-[185px] border border-[#7f9ac2]">
                <div class="flex-1 bg-white">
                    <table class="w-full table-fixed border-separate border-spacing-0 text-left text-black">
                        <colgroup><col class="w-4"><col></colgroup>
                        <thead>
                            <tr class="h-5 bg-linear-to-b from-[#f2f7fd] to-[#dce7f5] text-[#1e395b]"><th class="border-r border-b border-[#7f9ac2]"></th><th class="pl-1 pb-px font-normal border-b border-[#7f9ac2]">Nom du groupe</th></tr>
                            <tr class="h-[19px]"><td class="border-r border-b border-[#7f9ac2] bg-[#eaf2fb]"><svg class="w-2 h-[10px] ml-1"><use href="#pin"/></svg></td><td class="pl-1"><svg class="w-4 h-[11px]"><use href="#abc"/></svg></td></tr>
                            <tr class="h-[5px] bg-[#e8f1fb]"><td colspan="2" class="border-b border-[#7f9ac2]"></td></tr>
                        </thead>
                        <tbody>
                            <tr class="h-[19px]"><td class="border-r border-b border-[#7f9ac2] bg-[#eaf2fb]"></td><td><div class="flex items-center h-[19px] pl-1"><svg class="w-2 h-[6px] text-[#4c5c80]"><use href="#chev"/></svg><svg class="w-4 h-4 ml-[7px]"><use href="#group"/></svg><span class="flex-1 h-[19px] pt-[2px] pl-1 ml-px border-l border-b border-[#c0d8f4]">Groupes</span></div></td></tr>
                            <tr class="h-[19px]"><td class="border-r border-b border-[#7f9ac2] bg-[#eaf2fb]"></td><td><div class="flex items-center h-[19px] pl-[38px]"><svg class="w-[14px] h-[11px]"><use href="#card"/></svg><span class="flex-1 h-[19px] pt-[2px] pl-1 ml-[2px] border-l border-b border-[#c0d8f4]">B2_admin</span></div></td></tr>
                            <tr class="h-[19px]"><td class="border-r border-b border-[#7f9ac2] bg-[#eaf2fb]"></td><td><div class="flex items-center h-[19px] pl-[38px]"><svg class="w-[14px] h-[11px]"><use href="#card"/></svg><span class="flex-1 h-[19px] pt-[2px] pl-1 ml-[2px] border-l border-b border-[#c0d8f4]">B2_default</span></div></td></tr>
                            <tr class="h-[19px]"><td class="border-r border-b border-[#7f9ac2] bg-[#eaf2fb]"></td><td><div class="flex items-center h-[19px] pl-1"><svg class="w-2 h-[6px] text-[#4c5c80]"><use href="#chev"/></svg><svg class="w-4 h-4 ml-[7px]"><use href="#operators"/></svg><span class="flex-1 h-[19px] pt-[2px] pl-1 ml-px border-l border-b border-[#c0d8f4]">Opérateurs</span></div></td></tr>
                            <tr class="h-[19px]"><td class="border-r border-b border-[#7f9ac2] bg-[#eaf2fb]"><svg class="w-1 h-[7px] ml-[6px]"><use href="#right"/></svg></td><td><div class="flex items-center h-[19px] pl-[38px]"><svg class="w-[14px] h-[14px]"><use href="#key"/></svg><span class="flex-1 h-[19px] pt-[2px] pl-1 ml-[2px] border-l border-b border-[#c0d8f4] bg-[#e0eaf6]">admin</span></div></td></tr>
                            <tr class="h-[19px]"><td class="border-r border-b border-[#7f9ac2] bg-[#eaf2fb]"></td><td><div class="flex items-center h-[19px] pl-[38px]"><svg class="w-[14px] h-[11px]"><use href="#card"/></svg><span class="flex-1 h-[19px] pt-[2px] pl-1 ml-[2px] border-l border-b border-[#c0d8f4]">im_user</span></div></td></tr>
                            <tr class="h-[19px]"><td class="border-r border-b border-[#7f9ac2] bg-[#eaf2fb]"></td><td><div class="flex items-center h-[19px] pl-[38px]"><svg class="w-[14px] h-[11px]"><use href="#card"/></svg><span class="flex-1 h-[19px] pt-[2px] pl-1 ml-[2px] border-l border-b border-[#c0d8f4]">user</span></div></td></tr>
                        </tbody>
                    </table>
                </div>
                <div class="flex items-center h-[25px] px-[3px] border-t border-[#7f9ac2] text-[#3e5a84]">
                    <button type="button" aria-label="Effacer le filtre des opérateurs" class="flex items-center justify-center w-[17px] h-[19px] border border-[#7f9ac2]"><svg class="w-2 h-2"><use href="#x-small"/></svg></button>
                    <label class="relative ml-1 w-[13px] h-[13px]"><input type="checkbox" checked aria-label="Activer le filtre des opérateurs" class="block appearance-none w-[13px] h-[13px] border border-[#a4b8d4] bg-[#f2f5f9]"><svg class="absolute left-[2px] top-[2px] w-[9px] h-[9px]"><use href="#tick"/></svg></label>
                    <button type="button" class="h-[19px] px-[3px] ml-auto border border-[#7f9ac2]">Modifier le filtre</button>
                </div>
            </div>
            <div class="flex items-center justify-center w-[6px]"><svg class="w-[2px] h-[14px]"><use href="#grip"/></svg></div>

            <div class="flex flex-col flex-1 min-w-0 pl-3 pr-2 pt-3 pb-2">
                <div class="flex items-end justify-end pr-2 -mb-px whitespace-nowrap">
                    <button type="button" class="h-[21px] w-[110px] mb-px border border-b-0 border-[#7f9ac2] bg-linear-to-b from-[#b8cce4] to-[#a8bedb]">Éléments masqués</button>
                    <button type="button" class="relative h-[23px] w-[185px] -mx-px border border-b-0 border-[#7f9ac2] bg-[#cfdcee]">Vue arborescente de la structure</button>
                    <button type="button" class="h-[21px] w-[56px] mb-px border border-b-0 border-[#7f9ac2] bg-linear-to-b from-[#b8cce4] to-[#a8bedb]">Général</button>
                </div>
                <div class="flex flex-1 min-h-0 p-[11px] border border-[#7f9ac2]">
                    <!-- Structure tree -->
                    <div class="flex flex-col gap-1 w-[237px]">
                        <div class="flex">
                            <input type="text" aria-label="Rechercher dans l'arborescence" placeholder="Tapez le texte à rechercher..." class="flex-1 min-w-0 h-5 px-[3px] pb-px bg-white border border-[#7f9ac2] placeholder:text-[#8c94a0]">
                            <button type="button" aria-label="Rechercher" class="flex items-center justify-center w-4 h-5 border border-l-0 border-[#7f9ac2] bg-[#dce7f5] text-[#5c6c90]"><svg class="w-3 h-3"><use href="#search"/></svg></button>
                        </div>
                        <div class="flex flex-col flex-1 min-h-0 bg-white border border-[#7f9ac2]">
                            <div class="relative flex flex-1 min-h-0">
                                <ul class="flex-1 text-black whitespace-nowrap">
                                    <li class="flex items-center h-4 gap-[6px] pl-[72px]"><svg class="w-[14px] h-[14px]"><use href="#empty"/></svg>Élément d'espace vide</li>
                                    <li class="flex items-center h-4 gap-[6px] pl-[72px]"><span class="w-[14px] h-[14px] bg-[#5a8ad6]"></span>_IciUfbHeaderCollapse</li>
                                    <li class="flex items-center h-4 gap-[5px] pl-[34px]"><svg class="w-2 h-[6px] mr-[5px] text-[#4c5c80]"><use href="#chev"/></svg><svg class="w-4 h-4" viewBox="0 0 16 16"><path d="M6 0h10v10H6z" fill="#5a8ad6"/><path d="M0 6h10v10H0z" fill="#40a850"/></svg>_IcgLeftMiddle</li>
                                    <li class="flex items-center h-4 gap-[6px] pl-[72px]"><span class="w-[14px] h-[14px] bg-[#5a8ad6]"></span>IciGroups</li>
                                    <li class="flex items-center h-4 gap-[6px] pl-[34px]"><svg class="w-[14px] h-[14px]"><use href="#split"/></svg>Fraction</li>
                                    <li class="flex items-center h-4 gap-[6px] pl-[34px] bg-[#cfe0f8]"><span class="w-[14px] h-[14px] bg-[#5a8ad6]"></span>IciListExtension</li>
                                    <li class="flex items-center h-4 gap-[6px] pl-[34px]"><span class="w-[14px] h-[14px] bg-[#5a8ad6]"></span>IciOnlyActive</li>
                                    <li class="flex items-center h-4 gap-[6px] pl-[34px]"><span class="w-[14px] h-[14px] bg-[#5a8ad6]"></span>IciList</li>
                                    <li class="flex items-center h-4 gap-[6px] pl-[34px]"><span class="w-[14px] h-[14px] bg-[#5a8ad6]"></span>IciFiltrCaption</li>
                                    <li class="flex items-center h-4 gap-[6px] pl-[34px]"><span class="w-[14px] h-[14px] bg-[#5a8ad6]"></span>IciFiltrConstructor</li>
                                    <li class="flex items-center h-4 gap-[6px] pl-[34px]"><span class="w-[14px] h-[14px] bg-[#5a8ad6]"></span>IciFiltr</li>
                                    <li class="flex items-center h-4 gap-[6px]"><svg class="w-[9px] h-[3px]" viewBox="0 0 9 3"><path d="M0 3V1l3-1z" fill="#4c5c80"/></svg><span class="w-[14px] h-[14px] bg-[#5a8ad6]"></span>Éléments masqués</li>
                                    <li class="flex items-center h-4 gap-[6px] pl-[34px]"><span class="w-[14px] text-center text-[17px] font-['Liberation_Serif',serif] font-bold text-[#5a80c0]">A</span>Texte</li>
                                    <li class="flex items-center h-4 gap-[6px] pl-[34px]"><svg class="w-[14px] h-[14px]"><use href="#sep"/></svg>Séparateur</li>
                                    <li class="flex items-center h-4 gap-[6px] pl-[34px]"><svg class="w-[14px] h-[14px]"><use href="#empty"/></svg>Élément d'espace vide</li>
                                    <li class="flex items-center h-4 gap-[6px] pl-[34px]"><svg class="w-[14px] h-[14px]"><use href="#split"/></svg>Fraction</li>
                                </ul>
                                <!-- Highlight frame over the selected node -->
                                <div class="absolute -left-px top-[79px] w-[220px] h-[19px] border-2 border-[#f00000] shadow-[2px_2px_4px_#0006,inset_1px_1px_3px_#0005] pointer-events-none"></div>
                                <div class="flex flex-col items-center w-4 py-[7px] bg-[#e0eaf5] text-[#40587c]">
                                    <svg class="w-[9px] h-[5px] rotate-180"><use href="#caret"/></svg>
                                    <div class="flex items-center justify-center w-[14px] h-[171px] mt-auto mb-[6px] rounded-xs border border-[#8ba3c8] bg-linear-to-r from-[#e4eefa] to-[#c4d6ee]"><svg class="w-2 h-[7px]" viewBox="0 0 8 7"><path d="M0 .5h8M0 2.500h8M0 4.500h8M0 6.500h8" stroke="#7f9ac2"/></svg></div>
                                    <svg class="w-[9px] h-[5px]"><use href="#caret"/></svg>
                                </div>
                            </div>
                            <div class="flex items-center h-[17px] pl-[7px] pb-px bg-[#e0eaf5] text-[#40587c]">
                                <svg class="w-[5px] h-[9px] rotate-180"><use href="#right"/></svg>
                                <div class="flex items-center justify-center w-[172px] h-[15px] ml-4 mr-[6px] rounded-xs border border-[#8ba3c8] bg-linear-to-b from-[#e4eefa] to-[#c4d6ee]"><svg class="w-[7px] h-2" viewBox="0 0 7 8"><path d="M.5 0v8M2.500 0v8M4.500 0v8M6.500 0v8" stroke="#7f9ac2"/></svg></div>
                                <svg class="w-[5px] h-[9px]"><use href="#right"/></svg>
                            </div>
                        </div>
                    </div>
                    <div class="flex items-center justify-center w-[10px]"><svg class="w-[2px] h-[14px]"><use href="#grip"/></svg></div>

                    <!-- Properties -->
                    <div class="flex flex-col flex-1 min-w-0 bg-white border border-[#7f9ac2] text-black">
                        <div class="flex items-center h-[31px] pl-[5px] pr-1 bg-[#eaf2fb] border-b border-[#7f9ac2]">
                            <button type="button" aria-label="Par catégorie" class="flex items-center justify-center w-5 h-[22px] rounded-xs border border-[#c8a040] bg-[#ffd868]"><svg class="w-[14px] h-[16px]" viewBox="0 0 14 16"><path d="M0 4.500h6M3 1.500v6M0 12h6M3 9v6" stroke="#000" stroke-width="1.800"/><path d="M7 2.500h7M7 4.500h7M7 6.500h7M7 10.500h7M7 12.500h7M7 14.500h7" stroke="#000"/></svg></button>
                            <button type="button" aria-label="Par ordre alphabétique" class="flex items-center w-[15px] ml-[7px] text-[#1e395b]"><span class="flex flex-col w-2 text-[9px] leading-[9px] font-bold font-['Liberation_Sans',sans-serif]"><span>A</span><span>Z</span></span><svg class="w-[6px] h-[15px]" viewBox="0 0 6 15"><path d="M3 0v12M.5 10L3 13.500 5.500 10" fill="none" stroke="currentColor" stroke-width="1.800"/></svg></button>
                            <input type="text" aria-label="Rechercher une propriété" placeholder="Tapez le texte à rechercher..." class="flex-1 min-w-0 h-[22px] ml-[9px] px-[3px] pb-px bg-white border border-[#7f9ac2] placeholder:text-[#8c94a0]">
                            <button type="button" aria-label="Rechercher" class="flex items-center justify-center w-4 h-[22px] border border-l-0 border-[#7f9ac2] bg-[#dce7f5] text-[#5c6c90]"><svg class="w-3 h-3"><use href="#search"/></svg></button>
                        </div>
                        <div class="flex-1">
                            <table class="w-full table-fixed border-separate border-spacing-0 text-left">
                                <colgroup><col class="w-[19px]"><col class="w-[147px]"><col></colgroup>
                                <tr class="h-[18px]"><td><svg class="w-2 h-1 ml-[6px]"><use href="#caret"/></svg></td><th colspan="2" class="pl-[6px] font-bold border-b border-[#c0d8f4]">Comportement</th></tr>
                                <tr class="h-[18px]"><td></td><td class="pl-[5px] border-l border-r border-b border-[#c0d8f4] bg-[#e0eaf6]">AlwaysReadOnly</td><td class="pl-1 border-b border-[#c0d8f4]">False</td></tr>
                                <tr class="h-[18px]"><td></td><td class="pl-[5px] border-l border-r border-b border-[#c0d8f4]">TabStop</td><td class="pl-1 border-b border-[#c0d8f4]">False</td></tr>
                            </table>
                        </div>
                        <div class="h-[58px] pt-[2px] px-[5px] border-t border-[#7f9ac2]">
                            <h3 class="font-bold">AlwaysReadOnly</h3>
                            <p class="pt-1">Cette valeur indique si le champ doit être toujours en mode lecture seule.</p>
                        </div>
                    </div>
                </div>
            </div>
        </div>
    </div>
</body>
</html>
